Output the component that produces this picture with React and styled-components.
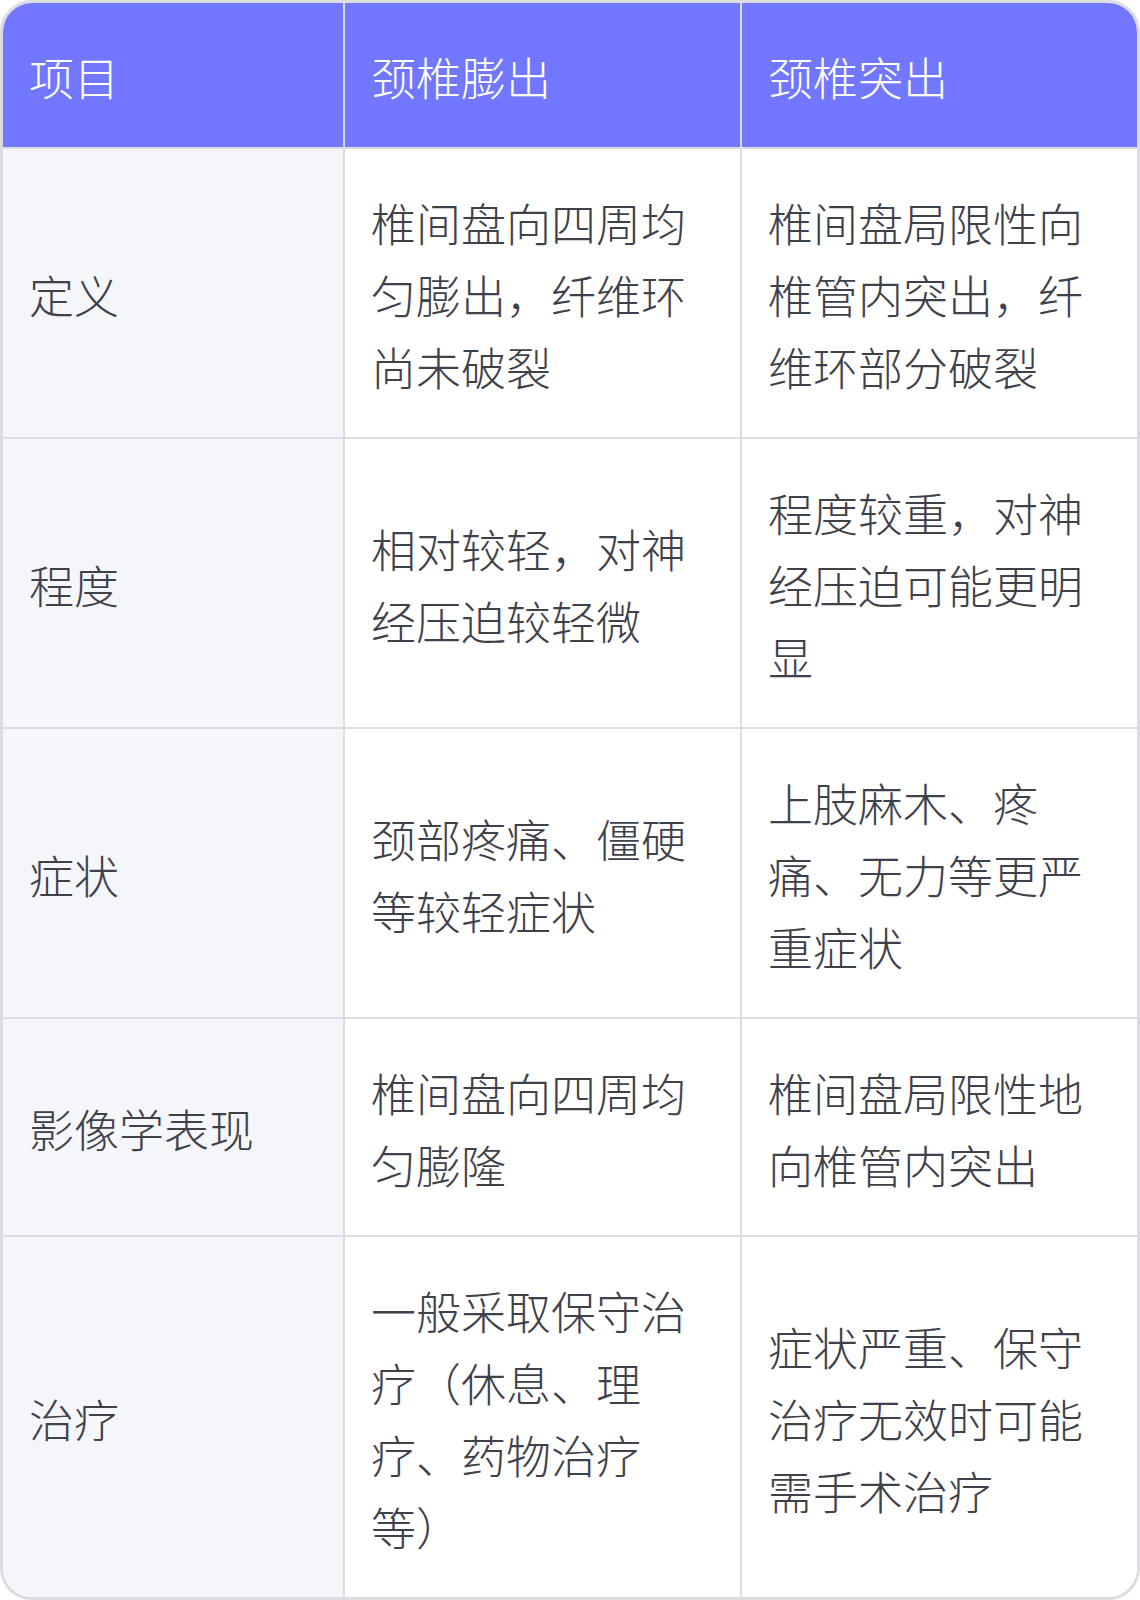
import styled, { createGlobalStyle } from "styled-components";

const GlobalStyle = createGlobalStyle`
    * {
        box-sizing: border-box;
    }

    body {
        margin: 0;
        background: #ffffff;
        font-family: "Noto Sans CJK SC", "Noto Sans", sans-serif;
    }
`;

const rows = [
    {
        item: "定义",
        bulge: "椎间盘向四周均匀膨出，纤维环尚未破裂",
        herniation: "椎间盘局限性向椎管内突出，纤维环部分破裂",
    },
    {
        item: "程度",
        bulge: "相对较轻，对神经压迫较轻微",
        herniation: "程度较重，对神经压迫可能更明显",
    },
    {
        item: "症状",
        bulge: "颈部疼痛、僵硬等较轻症状",
        herniation: "上肢麻木、疼痛、无力等更严重症状",
    },
    {
        item: "影像学表现",
        bulge: "椎间盘向四周均匀膨隆",
        herniation: "椎间盘局限性地向椎管内突出",
    },
    {
        item: "治疗",
        bulge: "一般采取保守治疗（休息、理疗、药物治疗等）",
        herniation: "症状严重、保守治疗无效时可能需手术治疗",
    },
];

export default function App() {
    return (
        <>
            <GlobalStyle />
            <Table>
                <HeadCell>项目</HeadCell>
                <HeadCell>颈椎膨出</HeadCell>
                <HeadCell $last>颈椎突出</HeadCell>

                {rows.map((row, i) => {
                    const bottom = i === rows.length - 1;
                    return [
                        <Cell key={row.item + "-a"} $first $bottom={bottom}>{row.item}</Cell>,
                        <Cell key={row.item + "-b"} $bottom={bottom}>{row.bulge}</Cell>,
                        <Cell key={row.item + "-c"} $last $bottom={bottom}>{row.herniation}</Cell>,
                    ];
                })}
            </Table>
        </>
    );
}

const Table = styled.div`
    width: 1140px;
    display: grid;
    grid-template-columns: 342px 397px 1fr;
    border: 3px solid #dcdde2;
    border-radius: 32px;
    overflow: hidden;
    background: #ffffff;
`;

const BaseCell = styled.div`
    display: flex;
    align-items: center;
    padding: 38px 26px 34px;
    font-size: 45px;
    line-height: 72px;
    font-weight: 300;
    text-spacing-trim: space-all;
    border-right: ${p => (p.$last ? "none" : "2px solid #dcdde2")};
    border-bottom: ${p => (p.$bottom ? "none" : "2px solid #dcdde2")};
`;

const HeadCell = styled(BaseCell)`
    background: #7177ff;
    color: #ffffff;
`;

const Cell = styled(BaseCell)`
    background: ${p => (p.$first ? "#f5f6fa" : "#ffffff")};
    color: #3e414a;
`;
